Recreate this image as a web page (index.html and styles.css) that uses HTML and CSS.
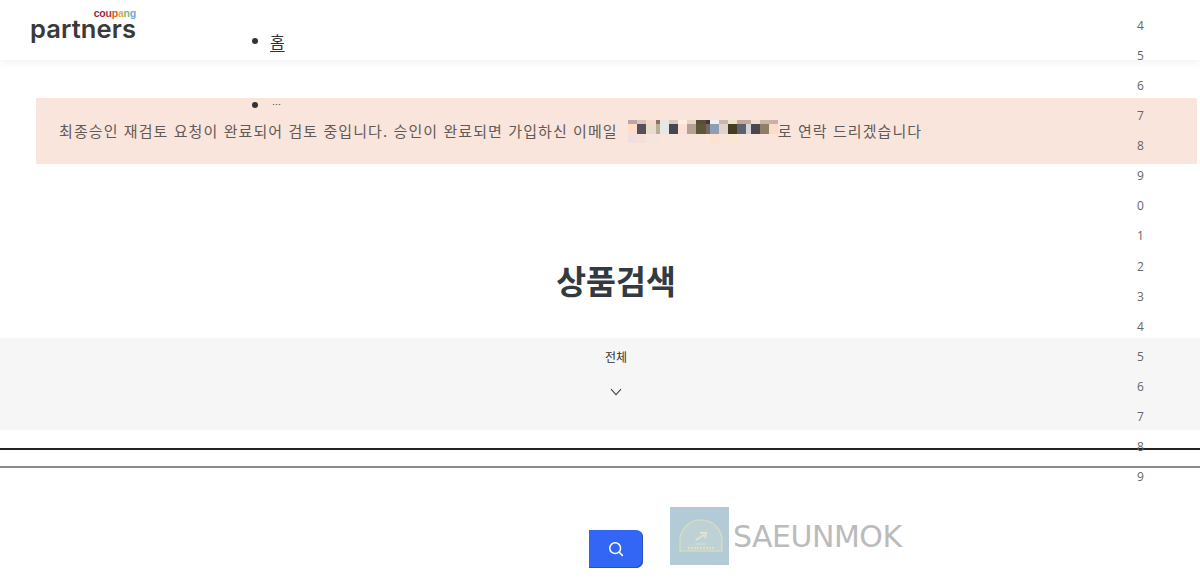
FILE: index.html
```html
<!DOCTYPE html>
<html lang="ko">
<head>
<meta charset="utf-8">
<title>상품검색</title>
<link rel="stylesheet" href="styles.css">
</head>
<body>
<header class="topbar">
  <a class="logo" href="#">
    <span class="logo-coupang"><span class="c1">co</span><span class="c2">u</span><span class="c3">p</span><span class="c4">a</span><span class="c5">n</span><span class="c6">g</span></span>
    <span class="logo-partners">partners</span>
  </a>
</header>
<ul class="nav">
  <li class="nav-home"><a href="#">홈</a></li>
  <li class="nav-more">⋯</li>
</ul>
<ol class="digits">
  <li>4</li><li>5</li><li>6</li><li>7</li><li>8</li><li>9</li><li>0</li><li>1</li>
  <li>2</li><li>3</li><li>4</li><li>5</li><li>6</li><li>7</li><li>8</li><li>9</li>
</ol>
<main>
  <div class="alert">
    <span>최종승인 재검토 요청이 완료되어 검토 중입니다. 승인이 완료되면 가입하신 이메일</span>
    <svg class="mosaic" width="150" height="23" viewBox="0 0 150 23" aria-hidden="true">
      <rect x="0" width="9" height="4" fill="#b9a6a8"/><rect x="9" width="9" height="4" fill="#d9c5bb"/><rect x="18" width="10" height="4" fill="#f7d6cc"/><rect x="28" width="4" height="4" fill="#8f6f65"/><rect x="32" width="9" height="4" fill="#e8e8e0"/><rect x="41" width="9" height="4" fill="#dcc8c0"/><rect x="50" width="9" height="4" fill="#fdeee3"/><rect x="59" width="9" height="4" fill="#e8d3c5"/><rect x="68" width="10" height="4" fill="#5b4c3b"/><rect x="78" width="4" height="4" fill="#3e3840"/><rect x="82" width="9" height="4" fill="#f0f0ee"/><rect x="91" width="9" height="4" fill="#c8b8ae"/><rect x="100" width="9" height="4" fill="#e9e6c8"/><rect x="109" width="14" height="4" fill="#bfa99c"/><rect x="123" width="9" height="4" fill="#efdcd3"/><rect x="132" width="9" height="4" fill="#c9b5a4"/><rect x="141" width="9" height="4" fill="#c9aeaa"/>
      <rect x="0" y="4" width="9" height="10" fill="#fddcc8"/><rect x="9" y="4" width="9" height="10" fill="#55505c"/><rect x="18" y="4" width="10" height="10" fill="#e8dccd"/><rect x="28" y="4" width="4" height="10" fill="#b9ad95"/><rect x="32" y="4" width="9" height="10" fill="#e6e8e4"/><rect x="41" y="4" width="9" height="10" fill="#454850"/><rect x="50" y="4" width="9" height="10" fill="#fbe0d6"/><rect x="59" y="4" width="9" height="10" fill="#b5a097"/><rect x="68" y="4" width="10" height="10" fill="#5f5538"/><rect x="78" y="4" width="4" height="10" fill="#7a6660"/><rect x="82" y="4" width="9" height="10" fill="#8ba0b0"/><rect x="91" y="4" width="9" height="10" fill="#e0d2cc"/><rect x="100" y="4" width="9" height="10" fill="#453d20"/><rect x="109" y="4" width="9" height="10" fill="#5a6170"/><rect x="118" y="4" width="5" height="10" fill="#d6d3d6"/><rect x="123" y="4" width="9" height="10" fill="#4a4650"/><rect x="132" y="4" width="9" height="10" fill="#8d7d69"/><rect x="141" y="4" width="9" height="10" fill="#fcdcc6"/>
      <rect x="0" y="14" width="9" height="9" fill="#f0dfe2"/><rect x="9" y="14" width="9" height="9" fill="#f5e0d5"/><rect x="18" y="14" width="14" height="9" fill="#f6e5dd"/><rect x="82" y="14" width="9" height="9" fill="#fde3cf"/><rect x="100" y="14" width="9" height="9" fill="#f9e7d6"/>
    </svg>
    <span>로 연락 드리겠습니다</span>
  </div>
  <h1 class="title">상품검색</h1>
  <section class="filter">
    <div class="filter-label">전체</div>
    <svg class="chevron" width="12" height="8" viewBox="0 0 12 8" aria-hidden="true"><path d="M1 1.2 6 6.6 11 1.2" fill="none" stroke="#444" stroke-width="1.1"/></svg>
  </section>
  <hr class="rule-dark">
  <hr class="rule-gray">
  <div class="search-row">
    <button class="search-btn" type="button" aria-label="검색">
      <svg width="18" height="18" viewBox="0 0 18 18" aria-hidden="true"><circle cx="8.2" cy="8.2" r="5.4" fill="none" stroke="#fff" stroke-width="1.5"/><path d="M12.2 12.2 15.4 15.4" stroke="#fff" stroke-width="1.6" stroke-linecap="round"/></svg>
    </button>
  </div>
</main>
<div class="watermark">
  <div class="wm-box">
    <svg width="59" height="58" viewBox="0 0 59 58" aria-hidden="true">
      <path d="M10 44V34a21 21 0 0 1 42 0v10z" fill="#bdd1d6" stroke="#d3dcc0" stroke-width="1.500"/>
      <path d="M26 33l8-5M30 26l6 0-1 5" fill="none" stroke="#e4e2cf" stroke-width="2"/>
      <path d="M25 37h11" stroke="#dfe2c8" stroke-width="1"/>
      <path d="M18 41h26" stroke="#d9dfc8" stroke-width="2.500" stroke-dasharray="2 1"/>
    </svg>
  </div>
  <span class="wm-text">SAEUNMOK</span>
</div>
</body>
</html>
```
FILE: styles.css
```css
* { box-sizing: border-box; }
html, body { margin: 0; padding: 0; }
body {
  position: relative;
  height: 579px;
  overflow: hidden;
  background: #fff;
  color: #333;
  font-family: "Noto Sans CJK KR", "Noto Sans", sans-serif;
}
.topbar {
  display: flex;
  align-items: flex-start;
  height: 60px;
  padding: 8px 0 0 30px;
  background: #fff;
  box-shadow: 0 3px 8px rgba(0, 0, 0, 0.05);
}
.logo {
  display: flex;
  flex-direction: column;
  align-items: flex-end;
  width: 106px;
  text-decoration: none;
}
.logo-coupang {
  height: 10px;
  font-family: "Liberation Sans", sans-serif;
  font-size: 10.500px;
  font-weight: 700;
  line-height: 10px;
  letter-spacing: -0.2px;
}
.c1 { color: #8f2b3c; }
.c2 { color: #b53a33; }
.c3 { color: #c9602f; }
.c4 { color: #e0ad42; }
.c5 { color: #7cb87e; }
.c6 { color: #6fa8dc; }
.logo-partners {
  font-family: "Inter", "Liberation Sans", sans-serif;
  font-size: 25.500px;
  font-weight: 600;
  line-height: 22px;
  letter-spacing: 0.1px;
  color: #3a3a3a;
}
.nav {
  position: absolute;
  left: 270px;
  top: 30px;
  margin: 0;
  padding: 0;
  list-style: none;
  font-size: 16px;
  color: #333;
}
.nav li { position: relative; }
.nav li::before {
  content: "";
  position: absolute;
  left: -18px;
  top: 8px;
  width: 6px;
  height: 6px;
  border-radius: 50%;
  background: #333;
}
.nav-home { height: 64px; line-height: 22px; }
.nav-home a { color: #333; text-decoration: underline; text-underline-offset: 3px; }
.nav-more {
  font-size: 9px;
  line-height: 22px;
  padding-left: 2px;
}
.digits {
  position: absolute;
  left: 1137px;
  top: 11px;
  margin: 0;
  padding: 0;
  list-style: none;
  font-family: "Open Sans", sans-serif;
  font-size: 12px;
  color: #666;
}
.digits li { height: 30.070px; line-height: 30px; }
.alert {
  display: flex;
  align-items: center;
  height: 66px;
  margin: 38px 3px 0 36px;
  padding: 0 0 2px 23px;
  background: #fae5dc;
  color: #5f5a58;
  font-size: 15px;
  letter-spacing: 1.080px;
  white-space: nowrap;
}
.mosaic { margin: 3px 0 0 10px; flex: none; }
.title {
  margin: 91px 0 0;
  padding-left: 32px;
  height: 83px;
  text-align: center;
  font-size: 32.500px;
  font-weight: 700;
  line-height: 50px;
  color: #333a42;
}
.filter {
  display: flex;
  flex-direction: column;
  align-items: center;
  height: 92px;
  padding: 8px 0 0 32px;
  background: #f6f6f6;
}
.filter-label { font-size: 12px; line-height: 22px; color: #333; }
.chevron { margin-top: 20px; }
.rule-dark, .rule-gray { margin: 0; border: 0; height: 2px; }
.rule-dark { margin-top: 18px; background: #222; }
.rule-gray { margin-top: 16px; background: #8a8a8a; }
.search-row { padding: 62px 0 0 589px; }
.search-btn {
  display: flex;
  align-items: center;
  justify-content: center;
  width: 54px;
  height: 38px;
  padding: 0;
  border: 0;
  border-radius: 0 7px 7px 0;
  background: #3466f6;
  box-shadow: inset -1px -1px 0 #2a4fc0;
}
.watermark {
  position: absolute;
  left: 670px;
  top: 507px;
  display: flex;
  align-items: center;
  gap: 4px;
}
.wm-box { width: 59px; height: 58px; background: #b3cbd6; }
.wm-box svg { display: block; }
.wm-text {
  font-family: "DejaVu Sans", sans-serif;
  font-size: 30px;
  font-weight: 400;
  color: #bbb;
  letter-spacing: -0.5px;
}
```
